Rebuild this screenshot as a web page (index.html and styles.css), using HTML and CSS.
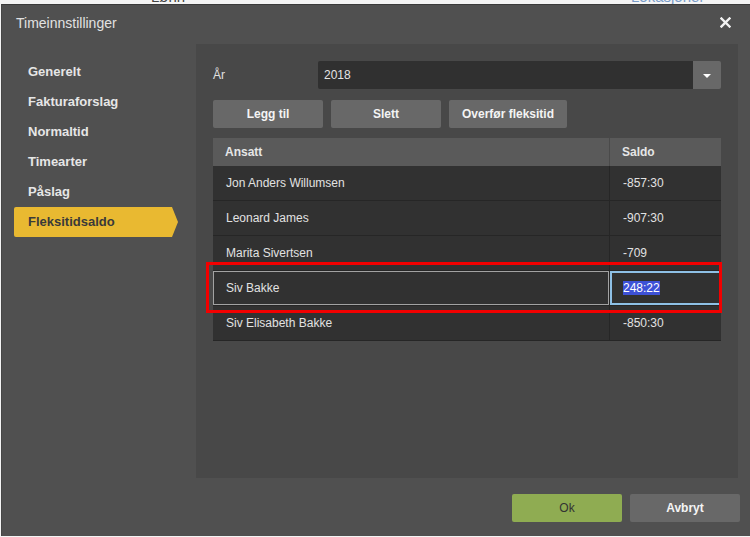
FILE: index.html
```html
<!DOCTYPE html>
<html lang="no">
<head>
    <meta charset="UTF-8">
    <meta name="viewport" content="width=device-width, initial-scale=1.0">
    <title>Timeinnstillinger</title>
    <link rel="stylesheet" href="styles.css">
</head>
<body>
    <div class="page-strip">
        <span class="page-link dark">Lønn</span>
        <span class="page-link blue">Lokasjoner</span>
    </div>

    <div class="dialog">
        <div class="dialog-header">
            <span class="dialog-title">Timeinnstillinger</span>
            <svg class="close" width="11" height="11" viewBox="0 0 11 11">
                <path d="M1.5 1.5 L9.5 9.5 M9.5 1.5 L1.5 9.5" stroke="#f2f2f2" stroke-width="2.4" stroke-linecap="square"/>
            </svg>
        </div>

        <div class="dialog-body">
            <ul class="nav">
                <li>Generelt</li>
                <li>Fakturaforslag</li>
                <li>Normaltid</li>
                <li>Timearter</li>
                <li>Påslag</li>
                <li class="active">Fleksitidsaldo</li>
            </ul>

            <div class="panel">
                <div class="year-row">
                    <label class="year-label">År</label>
                    <div class="select">
                        <span class="select-value">2018</span>
                        <span class="select-btn"><span class="caret"></span></span>
                    </div>
                </div>

                <div class="actions">
                    <button class="btn">Legg til</button>
                    <button class="btn">Slett</button>
                    <button class="btn wide">Overfør fleksitid</button>
                </div>

                <table class="grid">
                    <thead>
                        <tr><th>Ansatt</th><th class="col-saldo">Saldo</th></tr>
                    </thead>
                    <tbody>
                        <tr><td>Jon Anders Willumsen</td><td class="col-saldo">-857:30</td></tr>
                        <tr><td>Leonard James</td><td class="col-saldo">-907:30</td></tr>
                        <tr><td>Marita Sivertsen</td><td class="col-saldo">-709</td></tr>
                        <tr class="selected"><td>Siv Bakke</td><td class="col-saldo editing"><span class="sel-text">248:22</span></td></tr>
                        <tr><td>Siv Elisabeth Bakke</td><td class="col-saldo">-850:30</td></tr>
                    </tbody>
                </table>

                <div class="marker"></div>
            </div>
        </div>

        <div class="dialog-footer">
            <button class="btn ok">Ok</button>
            <button class="btn">Avbryt</button>
        </div>
    </div>
</body>
</html>
```

FILE: styles.css
```css
body {
    margin: 0;
    background: #f4f4f4;
    font-family: "Liberation Sans", Arial, sans-serif;
    overflow: hidden;
}
.page-strip {
    height: 4px;
    overflow: hidden;
    position: relative;
}
.page-link {
    position: absolute;
    top: -12px;
    font-size: 15px;
}
.page-link.dark {
    left: 151px;
    color: #444;
}
.page-link.blue {
    left: 631px;
    color: #7a9cc8;
}
.dialog {
    margin-left: 1px;
    height: 532px;
    background: #505050;
    border-top: 1px solid #3a3a3a;
    border-left: 1px solid #464646;
    display: flex;
    flex-direction: column;
    box-sizing: border-box;
}
.dialog-header {
    height: 39px;
    padding: 0 19px 4px 14px;
    display: flex;
    justify-content: space-between;
    align-items: center;
    box-sizing: border-box;
}
.dialog-title {
    font-size: 14px;
    color: #e2e2e2;
}
.dialog-body {
    display: flex;
    height: 434px;
}
.nav {
    list-style: none;
    margin: 0;
    padding: 13px 0 0 12px;
    width: 182px;
}
.nav li {
    height: 30px;
    line-height: 30px;
    padding-left: 14px;
    font-size: 13px;
    font-weight: bold;
    color: #e6e6e6;
}
.nav li.active {
    width: 164px;
    box-sizing: border-box;
    background: #e9b931;
    color: #3a3a3a;
    border-radius: 2px 0 0 2px;
    clip-path: polygon(0 0, calc(100% - 6px) 0, 100% 50%, calc(100% - 6px) 100%, 0 100%);
}
.panel {
    position: relative;
    width: 542px;
    background: #484848;
    padding: 17px;
    box-sizing: border-box;
}
.year-row {
    display: flex;
    align-items: center;
    height: 28px;
}
.year-label {
    width: 105px;
    font-size: 12px;
    color: #e0e0e0;
}
.select {
    display: flex;
    flex: 1;
    height: 28px;
}
.select-value {
    flex: 1;
    background: #303030;
    color: #e4e4e4;
    font-size: 12px;
    line-height: 28px;
    padding-left: 6px;
    border-radius: 2px 0 0 2px;
}
.select-btn {
    width: 28px;
    background: #686868;
    border-radius: 0 2px 2px 0;
    display: flex;
    align-items: center;
    justify-content: center;
}
.caret {
    width: 0;
    height: 0;
    border-left: 4px solid transparent;
    border-right: 4px solid transparent;
    border-top: 4px solid #fff;
    margin-top: 1px;
}
.actions {
    display: flex;
    gap: 8px;
    margin-top: 11px;
}
.btn {
    width: 110px;
    height: 28px;
    border: none;
    border-radius: 2px;
    background: #686868;
    color: #f4f4f4;
    font-family: inherit;
    font-size: 12px;
    font-weight: bold;
    padding: 0;
}
.btn.wide {
    width: 118px;
}
.btn.ok {
    background: #8fac52;
    color: #333;
    font-weight: normal;
}
.grid {
    margin-top: 10px;
    width: 508px;
    border-collapse: separate;
    border-spacing: 0;
    font-size: 12px;
}
.grid th {
    height: 28px;
    background: #5a5a5a;
    color: #e6e6e6;
    text-align: left;
    padding: 0 0 0 12px;
}
.grid td {
    height: 34px;
    background: #313131;
    color: #e2e2e2;
    padding: 0 0 0 13px;
    border-bottom: 1px solid #262626;
}
.grid .col-saldo {
    width: 112px;
    box-sizing: border-box;
    border-left: 1px solid #262626;
}
.grid th.col-saldo {
    border-left-color: #4a4a4a;
}
.grid tr.selected td {
    box-shadow: inset 0 0 0 1px #a2a2a2;
}
.grid tr.selected td.editing {
    box-shadow: inset 0 0 0 2px #8ec0e6;
}
.sel-text {
    background: #3d51d6;
    color: #fff;
}
.marker {
    position: absolute;
    left: 10px;
    top: 218px;
    width: 516px;
    height: 51px;
    border: 3px solid #f20000;
    box-sizing: border-box;
}
.dialog-footer {
    display: flex;
    justify-content: flex-end;
    gap: 8px;
    padding: 16px 10px 0 0;
}
```
